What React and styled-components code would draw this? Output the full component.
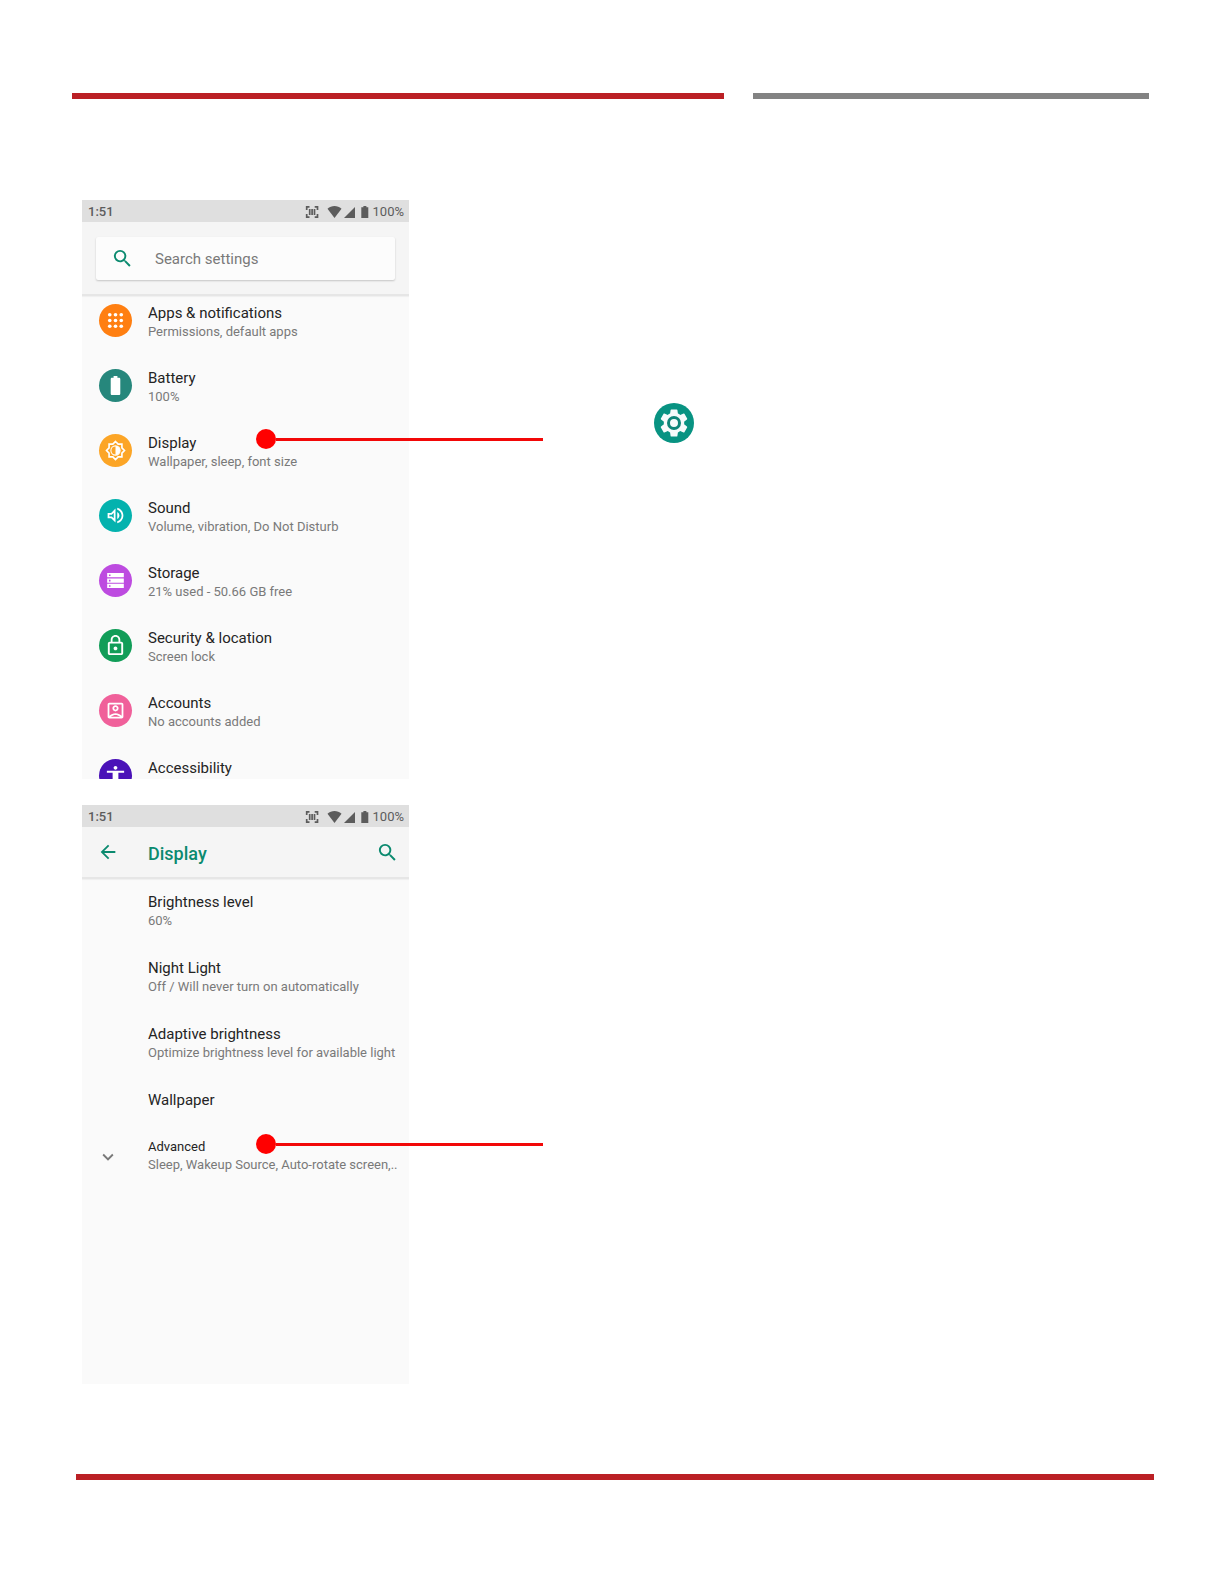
import styled, { createGlobalStyle } from 'styled-components';
import {
    MdAccessibility,
    MdArrowBack,
    MdBatteryFull,
    MdExpandMore,
    MdLockOutline,
    MdOutlineAccountBox,
    MdOutlineVolumeUp,
    MdSearch,
    MdSettings,
} from 'react-icons/md';

const COLORS = {
    brand: '#bb2025',
    rule: '#838383',
    accent: '#0b8a6f',
    callout: '#ff0000',
    title: '#242424',
    summary: '#797979',
    status: '#5c5c5c',
};

const AppsIcon = ({ size }) => (
    <svg width={size} height={size} viewBox="0 0 24 24" fill="currentColor" aria-hidden="true">
        {[6, 12, 18].map((y) => [6, 12, 18].map((x) => <circle key={`${x}-${y}`} cx={x} cy={y} r="1.900" />))}
    </svg>
);

const BrightnessIcon = ({ size }) => (
    <svg width={size} height={size} viewBox="0 0 24 24" fill="none" stroke="currentColor" aria-hidden="true">
        <path
            d="M12 2.600l2.800 2.700h3.900v3.900l2.700 2.800-2.700 2.800v3.900h-3.900L12 21.400l-2.800-2.700H5.300v-3.900L2.600 12l2.700-2.800V5.300h3.900z"
            strokeWidth="1.700"
        />
        <circle cx="12" cy="12" r="4.800" strokeWidth="1.100" />
        <path d="M12 7.200a4.800 4.800 0 0 1 0 9.600z" fill="currentColor" stroke="none" />
    </svg>
);

const StorageIcon = ({ size }) => (
    <svg width={size} height={size} viewBox="0 0 24 24" aria-hidden="true">
        <path d="M2.500 3.500h19v4.900h-19zM2.500 9.600h19v4.900h-19zM2.500 15.700h19v4.900h-19z" fill="currentColor" />
        <path d="M4.500 5.100h1.800v1.800H4.500zM4.500 11.200h1.800V13H4.500zM4.500 17.300h1.800v1.800H4.500z" fill="#bd4be0" />
    </svg>
);

const settings = [
    { title: 'Apps & notifications', summary: 'Permissions, default apps', color: '#ff7f11', Icon: AppsIcon, size: 23 },
    { title: 'Battery', summary: '100%', color: '#26877c', Icon: MdBatteryFull, size: 23 },
    { title: 'Display', summary: 'Wallpaper, sleep, font size', color: '#fca526', Icon: BrightnessIcon, size: 23 },
    { title: 'Sound', summary: 'Volume, vibration, Do Not Disturb', color: '#04b2ae', Icon: MdOutlineVolumeUp, size: 21 },
    { title: 'Storage', summary: '21% used - 50.66 GB free', color: '#bd4be0', Icon: StorageIcon, size: 21 },
    { title: 'Security & location', summary: 'Screen lock', color: '#119d58', Icon: MdLockOutline, size: 23 },
    { title: 'Accounts', summary: 'No accounts added', color: '#f0609a', Icon: MdOutlineAccountBox, size: 21 },
    { title: 'Accessibility', color: '#4a12b8', Icon: MdAccessibility, size: 23 },
];

const displayOptions = [
    { title: 'Brightness level', summary: '60%' },
    { title: 'Night Light', summary: 'Off / Will never turn on automatically' },
    { title: 'Adaptive brightness', summary: 'Optimize brightness level for available light' },
    { title: 'Wallpaper' },
];

const StatusBar = () => (
    <Status>
        <Clock>1:51</Clock>
        <StatusIcons viewBox="0 0 64 14" aria-hidden="true">
            <path
                d="M4.500 1.800H1.700V5M1.700 9v3.200h2.800M9.700 1.800h2.800V5M12.500 9v3.200H9.700M4.700 4v6M7.100 4v6M9.500 4v6"
                fill="none"
                stroke="currentColor"
                strokeWidth="1.700"
            />
            <path d="M22.500 3.800C26.500.2 32.500.2 36.500 3.800L29.500 13z" fill="currentColor" />
            <path d="M50 2v11H39z" fill="currentColor" />
            <path d="M58.400 1h3v1.200h1.900v10.800h-7V2.200h2.100z" fill="currentColor" />
        </StatusIcons>
        <span>100%</span>
    </Status>
);

const App = () => {
    return (
        <Page>
            <GlobalStyle />
            <Header>
                <Bar $color={COLORS.brand} />
                <Bar $color={COLORS.rule} />
            </Header>

            <Steps>
                <Step>
                    <Phone>
                        <StatusBar />
                        <SearchHeader>
                            <SearchBox>
                                <MdSearch size={23} />
                                <SearchInput type="search" placeholder="Search settings" />
                            </SearchBox>
                        </SearchHeader>
                        <List>
                            {settings.map(({ title, summary, color, Icon, size }) => (
                                <li key={title}>
                                    <Row href="#">
                                        <Badge $color={color}>
                                            <Icon size={size} />
                                        </Badge>
                                        <RowText>
                                            <Title>{title}</Title>
                                            <Summary>{summary}</Summary>
                                        </RowText>
                                    </Row>
                                </li>
                            ))}
                        </List>
                    </Phone>
                    <Callout $top={229} />
                    <Note>
                        <GearBadge>
                            <MdSettings size={34} />
                            <GearHub />
                        </GearBadge>
                    </Note>
                </Step>

                <Step>
                    <Phone>
                        <StatusBar />
                        <AppBar>
                            <IconButton aria-label="Back">
                                <MdArrowBack size={22} />
                            </IconButton>
                            <Heading>Display</Heading>
                            <IconButton aria-label="Search">
                                <MdSearch size={23} />
                            </IconButton>
                        </AppBar>
                        <OptionList>
                            {displayOptions.map(({ title, summary }) => (
                                <li key={title}>
                                    <Option href="#" $single={!summary}>
                                        <Title>{title}</Title>
                                        {summary && <Summary>{summary}</Summary>}
                                    </Option>
                                </li>
                            ))}
                        </OptionList>
                        <Advanced>
                            <Chevron size={22} />
                            <RowText>
                                <SmallTitle>Advanced</SmallTitle>
                                <Summary>Sleep, Wakeup Source, Auto-rotate screen,..</Summary>
                            </RowText>
                        </Advanced>
                    </Phone>
                    <Callout $top={329} />
                </Step>
            </Steps>

            <Footer>
                <Bar $color={COLORS.brand} />
            </Footer>
        </Page>
    );
};

const GlobalStyle = createGlobalStyle`
    * {
        box-sizing: border-box;
    }

    body {
        margin: 0;
        background-color: #fff;
        font-family: Roboto, sans-serif;
    }
`;

const Page = styled.div`
    padding: 93px 0 104px;
`;

const Header = styled.header`
    display: grid;
    grid-template-columns: 652fr 396fr;
    gap: 29px;
    padding: 0 75px 0 72px;
`;

const Footer = styled.footer`
    padding: 0 70px 0 76px;
`;

const Bar = styled.div`
    height: 6px;
    background-color: ${(props) => props.$color};
`;

const Steps = styled.main`
    display: flex;
    flex-direction: column;
    gap: 26px;
    padding: 101px 82px 90px;
`;

const Step = styled.section`
    position: relative;
    display: flex;
`;

const Phone = styled.div`
    flex: 0 0 327px;
    aspect-ratio: 327 / 579;
    overflow: hidden;
    background-color: #fafafa;
`;

const Note = styled.div`
    flex: 1;
    padding: 203px 0 0 245px;
`;

const Status = styled.div`
    display: flex;
    align-items: center;
    height: 22px;
    padding: 2px 5px 0 6px;
    background-color: #dfdfdf;
    color: ${COLORS.status};
    font-size: 13px;
    line-height: 20px;
`;

const Clock = styled.span`
    flex: 1;
    font-weight: 500;
`;

const StatusIcons = styled.svg`
    width: 64px;
    height: 14px;
    margin-right: 4px;
`;

const SearchHeader = styled.div`
    padding: 15px 14px 14px;
    background-color: #f5f5f5;
    border-bottom: 2px solid #e6e6e6;
    box-shadow: 0 1px 1px #f0f0f0;
`;

const SearchBox = styled.label`
    display: flex;
    align-items: center;
    gap: 21px;
    height: 43px;
    padding: 0 15px;
    border-radius: 2px;
    background-color: #fcfcfc;
    box-shadow: 0 1px 2px rgba(0, 0, 0, 0.2);
    color: ${COLORS.accent};
`;

const SearchInput = styled.input`
    flex: 1;
    min-width: 0;
    padding: 0;
    border: none;
    outline: none;
    background: none;
    font-family: inherit;
    font-size: 15px;

    &::placeholder {
        color: ${COLORS.summary};
        opacity: 1;
    }
`;

const List = styled.ul`
    margin: 0;
    padding: 0;
    list-style: none;
`;

const OptionList = styled(List)`
    padding-top: 4px;
`;

const Row = styled.a`
    display: flex;
    gap: 16px;
    height: 65px;
    padding: 8px 17px 0;
    text-decoration: none;
`;

const Badge = styled.span`
    display: flex;
    align-items: center;
    justify-content: center;
    flex: none;
    width: 33px;
    height: 33px;
    border-radius: 50%;
    background-color: ${(props) => props.$color};
    color: #fff;
`;

const RowText = styled.span`
    display: flex;
    flex-direction: column;
`;

const Title = styled.span`
    color: ${COLORS.title};
    font-size: 15px;
    line-height: 18px;
`;

const SmallTitle = styled(Title)`
    font-size: 13px;
    line-height: 16px;
`;

const Summary = styled.span`
    color: ${COLORS.summary};
    font-size: 13px;
    line-height: 20px;
    white-space: nowrap;
`;

const AppBar = styled.div`
    display: flex;
    align-items: center;
    height: 52px;
    padding: 0 10px 0 15px;
    background-color: #f5f5f5;
    border-bottom: 2px solid #e6e6e6;
    box-shadow: 0 1px 1px #f0f0f0;
`;

const Heading = styled.h1`
    flex: 1;
    margin: 2px 0 0 29px;
    color: ${COLORS.accent};
    font-size: 18px;
    font-weight: 500;
`;

const IconButton = styled.button`
    display: flex;
    padding: 0;
    border: none;
    background: none;
    color: ${COLORS.accent};
    cursor: pointer;
`;

const Option = styled.a`
    display: flex;
    flex-direction: column;
    height: ${(props) => (props.$single ? '48px' : '66px')};
    padding: 10px 16px 0 66px;
    text-decoration: none;
`;

const Advanced = styled.button`
    display: flex;
    align-items: center;
    gap: 29px;
    width: 100%;
    padding: 10px 15px;
    border: none;
    background: none;
    color: ${COLORS.summary};
    font-family: inherit;
    text-align: left;
    cursor: pointer;
`;

const Chevron = styled(MdExpandMore)`
    flex: none;
`;

/* marker dot on the screen with a leader line running out to the right */
const Callout = styled.div`
    position: absolute;
    top: ${(props) => props.$top}px;
    left: 174px;
    display: flex;
    align-items: center;
    width: 287px;
    height: 20px;

    &::before {
        content: '';
        width: 20px;
        height: 20px;
        border-radius: 50%;
        background-color: ${COLORS.callout};
    }

    &::after {
        content: '';
        flex: 1;
        height: 3px;
        background-color: #f20808;
    }
`;

const GearBadge = styled.div`
    position: relative;
    display: flex;
    align-items: center;
    justify-content: center;
    width: 40px;
    height: 40px;
    border-radius: 50%;
    background-color: #089382;
    color: #f7fbfb;
`;

const GearHub = styled.span`
    position: absolute;
    width: 14px;
    height: 14px;
    border: 3px solid #0f8578;
    border-radius: 50%;
    background-color: #f7fbfb;
`;

export default App;
